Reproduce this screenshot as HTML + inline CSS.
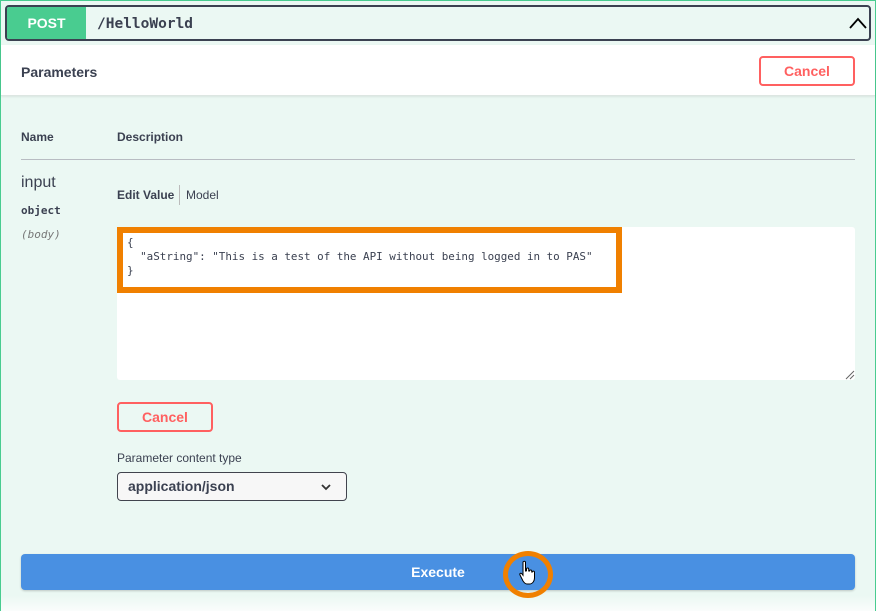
<!DOCTYPE html>
<html><head><meta charset="utf-8"><style>
*{box-sizing:border-box;margin:0;padding:0}
body{width:876px;height:611px;overflow:hidden;background:#fff;font-family:"Liberation Sans",sans-serif;color:#3b4151;position:relative}
.wrap{position:absolute;left:0;top:0;width:876px;height:611px;border:1px solid #49cc90;border-bottom:none;background:#ebf8f3}
.hdr{position:absolute;left:5px;top:5px;width:866px;height:36px;border:2px solid #3b4151;border-radius:4px;background:#ebf8f3;overflow:hidden}
.post{position:absolute;left:0;top:0;width:79px;height:32px;background:#49cc90;color:#fff;font-weight:bold;font-size:14px;text-align:center;line-height:32px}
.path{position:absolute;left:90px;top:1px;line-height:32px;font-family:"DejaVu Sans Mono",monospace;font-weight:bold;font-size:14.5px;color:#3b4151}
.params{position:absolute;left:1px;top:45px;width:874px;height:51px;background:#fff;border-bottom:1px solid #dde6e2;box-shadow:0 1px 2px rgba(0,0,0,.08)}
.btn{position:absolute;border:2px solid #ff6060;border-radius:4px;color:#ff6060;font-weight:bold;font-size:14px;text-align:center;background:transparent}
.t{position:absolute;font-size:12px;font-weight:bold}
.mono{font-family:"DejaVu Sans Mono",monospace}
</style></head><body>
<div class="wrap"></div>
<div class="hdr"><div class="post">POST</div><div class="path">/HelloWorld</div>
<svg style="position:absolute;right:0;top:6px" width="22" height="20"><path d="M3 15 L11 6 L19 15" stroke="#000" stroke-width="1.8" fill="none"/></svg></div>
<div class="params"><div class="t" style="left:20px;top:19px;font-size:14px">Parameters</div>
<div class="btn" style="left:758px;top:11px;width:96px;height:30px;line-height:26px">Cancel</div></div>
<div class="t" style="left:21px;top:130px">Name</div>
<div class="t" style="left:117px;top:130px">Description</div>
<div style="position:absolute;left:21px;top:159px;width:834px;height:1px;background:#b8bcc2"></div>
<div style="position:absolute;left:21px;top:174px;font-size:16px">input</div>
<div class="t mono" style="left:21px;top:204px;font-size:11px">object</div>
<div class="mono" style="position:absolute;left:21px;top:228px;font-size:11px;font-style:italic;color:#777">(body)</div>
<div style="position:absolute;left:117px;top:188px;font-size:12px"><b>Edit Value</b></div>
<div style="position:absolute;left:179px;top:185px;width:1px;height:20px;background:#bbb"></div>
<div style="position:absolute;left:186px;top:188px;font-size:12px">Model</div>
<div style="position:absolute;left:117px;top:227px;width:738px;height:153px;background:#fff;border-radius:3px"></div>
<div style="position:absolute;left:117px;top:227px;width:505px;height:66px;border:6px solid #f08000"></div>
<div class="mono" style="position:absolute;left:127px;top:236px;font-size:10.9px;line-height:14px;white-space:pre;color:#3b4151">{
  "aString": "This is a test of the API without being logged in to PAS"
}</div>
<svg style="position:absolute;left:845px;top:370px" width="10" height="10"><path d="M9 1L1 9M9 5L5 9" stroke="#666"/></svg>
<div class="btn" style="left:117px;top:402px;width:96px;height:30px;line-height:26px">Cancel</div>
<div style="position:absolute;left:117px;top:451px;font-size:12px">Parameter content type</div>
<div style="position:absolute;left:117px;top:472px;width:230px;height:29px;border:1px solid #41444e;border-radius:4px;background:#f7f7f7;font-weight:bold;font-size:14px;line-height:27px;padding-left:10px">application/json
<svg style="position:absolute;right:14px;top:10px" width="12" height="8"><path d="M2 2L6 6L10 2" stroke="#333" stroke-width="1.8" fill="none"/></svg></div>
<div style="position:absolute;left:1px;top:596px;width:874px;height:15px;background:linear-gradient(#ebf8f3,#fafdfc)"></div>
<div style="position:absolute;left:21px;top:554px;width:834px;height:36px;background:#4990e2;border-radius:4px;color:#fff;font-weight:bold;font-size:14px;text-align:center;line-height:36px;box-shadow:0 1px 2px rgba(0,0,0,.2)">Execute</div>
<div style="position:absolute;left:503px;top:551px;width:50px;height:47px;border:5px solid #f08000;border-radius:50%"></div>
<svg style="position:absolute;left:518px;top:560px" width="20" height="26" viewBox="0 0 20 26"><path d="M5 2c1-1 2.5-1 2.5 .5V11l1-.2V9c0-1.3 2.2-1.3 2.2 0v2l.8 0c0-1.3 2.2-1.3 2.2 0v1l.6 0c0-1.2 2.2-1.2 2.2.3V18c0 3-2 6-5 6H9c-2 0-3-1.5-4-3L2 15c-.8-1.5 1-2.5 2-1l1 1.3V2z" fill="#fff" stroke="#000" stroke-width="1"/></svg>
</body></html>
